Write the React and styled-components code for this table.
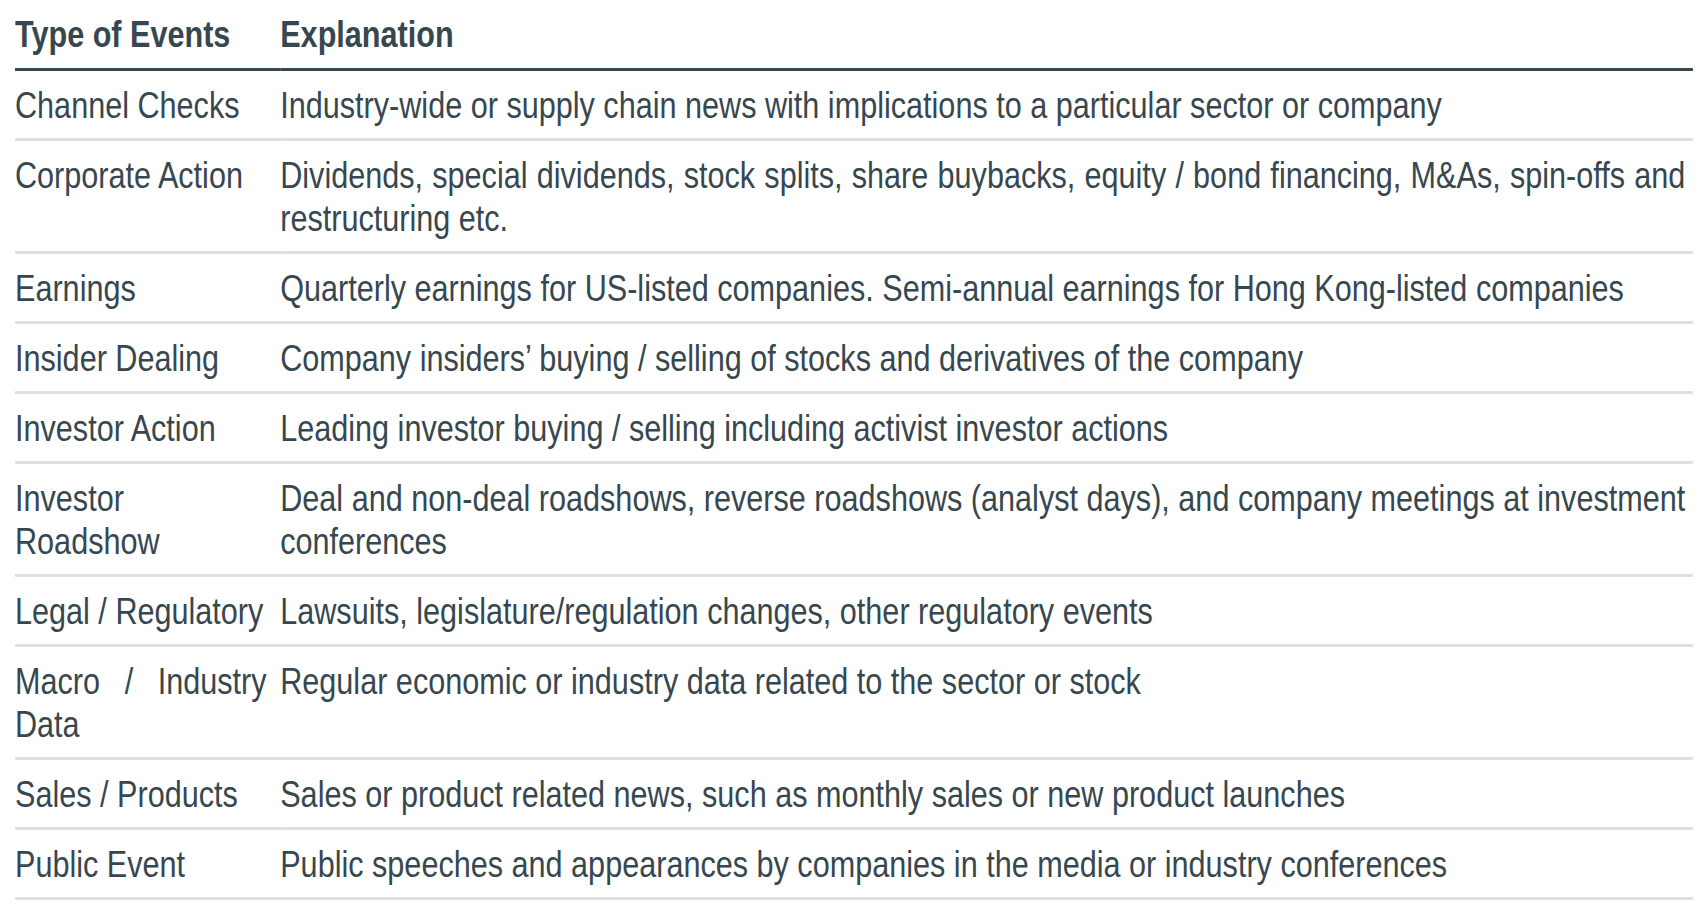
import React from "react";
import styled, { createGlobalStyle } from "styled-components";

const GlobalStyle = createGlobalStyle`
  html, body {
    margin: 0;
    padding: 0;
    background: #fff;
    overflow: hidden;
  }
  body {
    font-family: "Liberation Sans", Arial, sans-serif;
    color: #37474f;
  }
`;

const Page = styled.div`
  padding: 8px 0 0 15px;
`;

// the source uses a narrow Arial; squeeze Liberation Sans to match it
const Table = styled.table`
  width: 1974px;
  table-layout: fixed;
  border-collapse: collapse;
  font-size: 36px;
  line-height: 43px;
  transform: scaleX(0.85);
  transform-origin: 0 0;
`;

const HeadCell = styled.th`
  text-align: left;
  font-weight: 700;
  padding: 5px 16px 12px 0;
  border-bottom: 3px solid #37474f;
  width: ${(p) => p.$width || "auto"};
`;

const Row = styled.tr`
  border-bottom: 3px solid #dde1e4;
`;

const Cell = styled.td`
  vertical-align: top;
  text-align: justify;
  padding: 13px 16px 11px 0;

  &:last-child {
    padding-right: 9px;
  }
`;

const events = [
  ["Channel Checks", "Industry-wide or supply chain news with implications to a particular sector or company"],
  ["Corporate Action", "Dividends, special dividends, stock splits, share buybacks, equity / bond financing, M&As, spin-offs and restructuring etc."],
  ["Earnings", "Quarterly earnings for US-listed companies. Semi-annual earnings for Hong Kong-listed companies"],
  ["Insider Dealing", "Company insiders\u2019 buying / selling of stocks and derivatives of the company"],
  ["Investor Action", "Leading investor buying / selling including activist investor actions"],
  ["Investor Roadshow", "Deal and non-deal roadshows, reverse roadshows (analyst days), and company meetings at investment conferences"],
  ["Legal / Regulatory", "Lawsuits, legislature/regulation changes, other regulatory events"],
  ["Macro / Industry Data", "Regular economic or industry data related to the sector or stock"],
  ["Sales / Products", "Sales or product related news, such as monthly sales or new product launches"],
  ["Public Event", "Public speeches and appearances by companies in the media or industry conferences"],
];

export default function App() {
  return (
    <Page>
      <GlobalStyle />
      <Table>
        <thead>
          <tr>
            <HeadCell $width="296px">Type of Events</HeadCell>
            <HeadCell>Explanation</HeadCell>
          </tr>
        </thead>
        <tbody>
          {events.map(([type, text]) => (
            <Row key={type}>
              <Cell>{type}</Cell>
              <Cell>{text}</Cell>
            </Row>
          ))}
        </tbody>
      </Table>
    </Page>
  );
}
